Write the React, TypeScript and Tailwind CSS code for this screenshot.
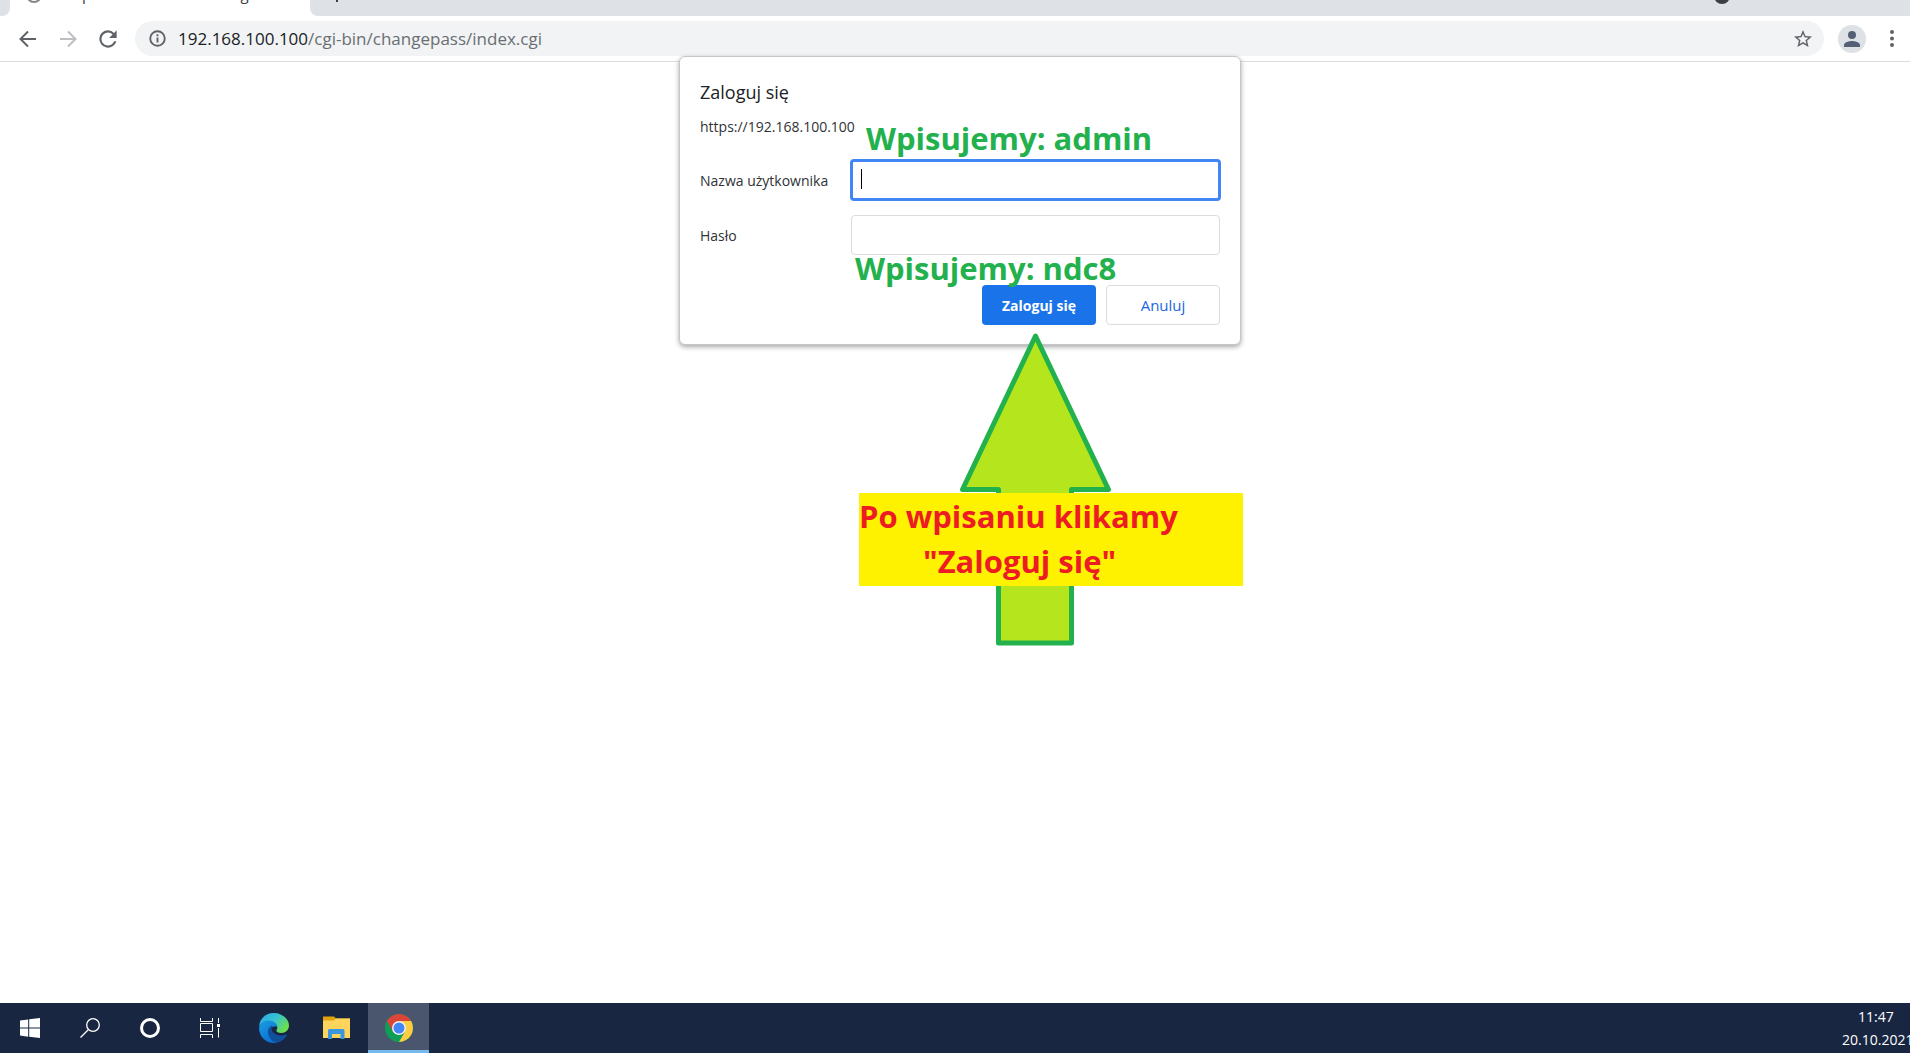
import React from 'react';

function ToolButton({ label, children, className = '' }: { label: string; children: React.ReactNode; className?: string }) {
  return (
    <button aria-label={label} className={'flex size-10 shrink-0 items-center justify-center ' + className}>
      {children}
    </button>
  );
}

function Tabs() {
  return (
    <div className="flex h-4 overflow-hidden bg-[#dee1e6]">
      <div className="flex w-full bg-white">
        <div className="w-2.5 shrink-0 rounded-br-lg bg-[#dee1e6]" />
        <div className="flex w-[300px] shrink-0 items-end gap-5 overflow-hidden pl-4">
          <span className="mb-[13px] size-4 shrink-0 rounded-full border-2 border-[#80868b]" />
          <span className="mb-3 text-[15px] leading-5 whitespace-nowrap text-[#3c4043]">https://192.168.100.100/cgi-bin/</span>
        </div>
        <div className="flex flex-1 items-start rounded-bl-lg bg-[#dee1e6]">
          <span className="ml-[26px] h-0.5 w-0.5 bg-[#3c4043]" />
          <span className="-mt-3 mr-[180px] ml-auto size-4 rounded-full bg-[#3c4043]" />
        </div>
      </div>
    </div>
  );
}

function Toolbar() {
  return (
    <div className="flex h-[46px] items-center border-b border-[#d9dbde] bg-white pr-1 pl-2">
      <ToolButton label="Wstecz">
        <svg width="20" height="20" viewBox="0 0 20 20" fill="none" stroke="#5f6368" strokeWidth="2">
          <path d="M18 10H3M10 2.500L2.500 10L10 17.500" />
        </svg>
      </ToolButton>
      <ToolButton label="Dalej">
        <svg width="20" height="20" viewBox="0 0 20 20" fill="none" stroke="#bcbec1" strokeWidth="2">
          <path d="M2 10H17M10 2.500L17.500 10L10 17.500" />
        </svg>
      </ToolButton>
      <ToolButton label="Odśwież">
        <svg width="26" height="26" viewBox="0 0 24 24" fill="#5f6368">
          <path d="M17.650 6.350A7.960 7.960 0 0 0 12 4a8 8 0 1 0 7.730 10h-2.080A6 6 0 1 1 12 6c1.660 0 3.140.690 4.220 1.780L13 11h7V4l-2.350 2.350z" />
        </svg>
      </ToolButton>
      <div className="ml-[7px] flex h-[35px] min-w-0 flex-1 items-center rounded-full bg-[#f1f3f4] pr-3 pl-3.5">
        <svg width="17" height="17" viewBox="0 0 18 18" fill="none" stroke="#5f6368" strokeWidth="2" className="shrink-0">
          <circle cx="9" cy="9" r="7.700" />
          <path d="M9 8v5.200M9 4.600v2" />
        </svg>
        <div aria-label="Adres" className="ml-3 min-w-0 flex-1 text-[17px] leading-6 whitespace-nowrap text-[#6a6e73]">
          <span className="text-[#202124]">192.168.100.100</span>/cgi-bin/changepass/index.cgi
        </div>
        <button aria-label="Dodaj zakładkę">
          <svg width="18" height="18" viewBox="2 2 20 20" fill="#5f6368">
            <path d="M22 9.240l-7.190-.620L12 2 9.190 8.630 2 9.240l5.460 4.730L5.820 21 12 17.270 18.180 21l-1.630-7.030L22 9.240zM12 15.400l-3.760 2.270 1-4.280-3.320-2.880 4.380-.380L12 6.100l1.710 4.040 4.380.380-3.320 2.880 1 4.280L12 15.400z" />
          </svg>
        </button>
      </div>
      <button aria-label="Profil" className="ml-3.5 flex size-7 items-center justify-center rounded-full bg-[#dee1e6]">
        <svg width="16" height="16" viewBox="4 4 16 16" fill="#556075">
          <path d="M12 12a4 4 0 1 0 0-8 4 4 0 0 0 0 8zm0 2c-2.670 0-8 1.340-8 4v2h16v-2c0-2.660-5.330-4-8-4z" />
        </svg>
      </button>
      <button aria-label="Menu" className="ml-3 flex size-7 items-center justify-center">
        <svg width="4" height="17" viewBox="0 0 4 17" fill="#5f6368">
          <circle cx="2" cy="2" r="2" />
          <circle cx="2" cy="8.500" r="2" />
          <circle cx="2" cy="15" r="2" />
        </svg>
      </button>
    </div>
  );
}

function Note({ children, className }: { children: React.ReactNode; className: string }) {
  return (
    <p className={'pointer-events-none absolute text-[31px] leading-[44px] font-bold whitespace-nowrap ' + className}>
      {children}
    </p>
  );
}

function LoginDialog() {
  return (
    <div className="relative w-[562px]">
      <form
        role="dialog"
        aria-labelledby="login-title"
        onSubmit={(e) => e.preventDefault()}
        className="rounded-md border border-[#c4c6c9] bg-white px-5 pt-5 pb-[19px] text-[14px] text-[#303236] shadow-[0_2px_5px_rgba(0,0,0,0.35)]"
      >
        <h1 id="login-title" className="text-[18px] leading-[30px] text-[#202124]">Zaloguj się</h1>
        <p className="mt-2 leading-6">https://192.168.100.100</p>
        <div className="mt-[21px] flex items-center">
          <label htmlFor="user" className="w-[151px]">Nazwa użytkownika</label>
          <div className="relative -m-px flex-1">
            <input id="user" type="text" autoComplete="off" className="block h-[42px] w-full rounded border-[3px] border-[#4285f4] bg-white px-2 caret-transparent outline-none" />
            <span className="absolute top-2.5 left-[11px] h-5 w-px bg-black" />
          </div>
        </div>
        <div className="mt-[15px] flex items-center">
          <label htmlFor="pass" className="w-[151px]">Hasło</label>
          <input id="pass" type="password" className="block h-10 min-w-0 flex-1 rounded border border-[#dadce0] bg-white px-2 outline-none" />
        </div>
        <div className="mt-[30px] flex justify-end gap-2.5">
          <button type="submit" className="h-10 w-[114px] rounded bg-[#1a73e8] font-bold text-white">Zaloguj się</button>
          <button type="button" className="h-10 w-[114px] rounded border border-[#dadce0] text-[15px] font-medium text-[#1a66e0]">Anuluj</button>
        </div>
      </form>
      <Note className="top-[60px] left-[187px] text-[#22b14c]">Wpisujemy: admin</Note>
      <Note className="top-[190px] left-[176px] text-[#22b14c]">Wpisujemy: ndc8</Note>
      <svg width="152" height="313" viewBox="0 0 152 313" className="absolute top-[277px] left-[281px]" fill="#b5e61d" stroke="#22b14c" strokeWidth="5" strokeLinejoin="round">
        <path d="M75.500 3L148.500 156.500H111.500V310H38.500V156.500H2.500Z" />
      </svg>
      <div className="absolute top-[437px] left-[180px] h-[93px] w-[384px] bg-[#fff200] text-[#ed1c24]">
        <Note className="top-px left-0">Po wpisaniu klikamy</Note>
        <Note className="top-[46px] left-16">"Zaloguj się"</Note>
      </div>
    </div>
  );
}

function EdgeIcon() {
  return (
    <svg width="30" height="30" viewBox="0 0 30 30">
      <defs>
        <linearGradient id="edge-top" x1="0" y1="0" x2="1" y2="0.600">
          <stop offset="0" stopColor="#2aa5e0" />
          <stop offset="0.500" stopColor="#35c1d8" />
          <stop offset="1" stopColor="#6be04a" />
        </linearGradient>
        <linearGradient id="edge-left" x1="0" y1="0" x2="0.600" y2="1">
          <stop offset="0" stopColor="#1b9de2" />
          <stop offset="1" stopColor="#0b6fd0" />
        </linearGradient>
      </defs>
      <path d="M0 13C1 5 7 0 15 0c8 0 15 6 15 12.500C30 17 26.500 20 22.500 20c-4 0-5.500-1.500-5-3 1-1.500 1.300-3 0-5C14 7 5 7 0 13z" fill="url(#edge-top)" />
      <path d="M0 14.500C1 10 5 7.500 9.500 7.500c5 0 8.500 3 8.500 6.500-4-1.500-8 1-8 6 0 5 4 9 9 9.300C10 32 0 26 0 14.500z" fill="url(#edge-left)" />
      <path d="M13.500 12.300C9.500 14 8 18 9.500 22c2 5 6 8 9.500 7.300 3-.600 7-3.300 9-7 .300-.600-.200-1-.800-.700C22 24 15 22 13 17.500c-.800-2-.500-3.800.500-5.200z" fill="#10509a" />
    </svg>
  );
}

function FolderIcon() {
  return (
    <svg width="27" height="24" viewBox="0 0 27 24">
      <path d="M0 .500h11l2 2H27V8H0z" fill="#e0a30b" />
      <path d="M0 4.500h11l2-2h14V22H0z" fill="#ffd45c" />
      <path d="M5 23V14.500q0-1.500 1.500-1.500h13.500q1.500 0 1.500 1.500V23h-4v-5H9v5z" fill="#3a96dd" />
    </svg>
  );
}

function ChromeIcon() {
  return (
    <svg width="28" height="28" viewBox="0 0 28 28">
      <circle cx="14" cy="14" r="14" fill="#109d58" />
      <path d="M14 28A14 14 0 0 0 26.120 7H14l6.060 10.500z" fill="#ffcd40" />
      <path d="M14 7h12.120A14 14 0 0 0 1.880 7L7.940 17.500z" fill="#db4437" />
      <circle cx="14" cy="14" r="7" fill="#f1f1f1" />
      <circle cx="14" cy="14" r="5.500" fill="#4285f4" />
    </svg>
  );
}

function Task({ label, children, className = 'w-[60px]' }: { label: string; children: React.ReactNode; className?: string }) {
  return (
    <button aria-label={label} className={'flex shrink-0 items-center justify-center ' + className}>
      {children}
    </button>
  );
}

function Taskbar() {
  return (
    <footer className="flex h-[50px] overflow-hidden bg-[#192642]">
      <Task label="Start">
        <svg width="20" height="20" viewBox="0 0 20 20" fill="white">
          <path d="M0 2.600L8.200 1.400V9.500H0zM9.200 1.300L20 0v9.500H9.200zM0 10.500H8.200v8.200L0 17.500zM9.200 10.500H20V20L9.200 18.700z" />
        </svg>
      </Task>
      <Task label="Szukaj">
        <svg width="20" height="20" viewBox="0 0 20 20" fill="none" stroke="white" strokeWidth="1.300">
          <circle cx="13" cy="7" r="6.300" />
          <path d="M8.500 11.500L.500 19.500" />
        </svg>
      </Task>
      <Task label="Cortana">
        <span className="size-5 rounded-full border-[3px] border-white" />
      </Task>
      <Task label="Widok zadań">
        <svg width="20" height="20" viewBox="0 0 20 20" fill="none" stroke="white">
          <path d="M.500 0v3.500h12V0M.500 5.500h12v8h-12zM.500 20v-3.500h12V20M18.500 0v5M18.500 10v9.500" />
          <path d="M17 6h3v3h-3z" fill="white" stroke="none" />
        </svg>
      </Task>
      <Task label="Edge" className="w-[67px]"><EdgeIcon /></Task>
      <Task label="Eksplorator plików" className="w-[61px] pr-0.5"><FolderIcon /></Task>
      <Task label="Chrome" className="w-[61px] border-b-[3px] border-[#76b9ed] bg-[#4a556e] pt-0.5"><ChromeIcon /></Task>
      <div className="ml-auto flex w-[68px] shrink-0 flex-col text-[14px] leading-[23px] whitespace-nowrap text-white">
        <time className="mt-0.5 ml-4">11:47</time>
        <time>20.10.2021</time>
      </div>
    </footer>
  );
}

export default function App() {
  return (
    <div className="flex min-h-screen flex-col overflow-hidden bg-white font-['Open_Sans',sans-serif]">
      <header>
        <Tabs />
        <Toolbar />
      </header>
      <main className="relative flex-1">
        <div className="absolute inset-x-0 -top-1.5 flex justify-center pl-2.5">
          <LoginDialog />
        </div>
      </main>
      <Taskbar />
    </div>
  );
}
